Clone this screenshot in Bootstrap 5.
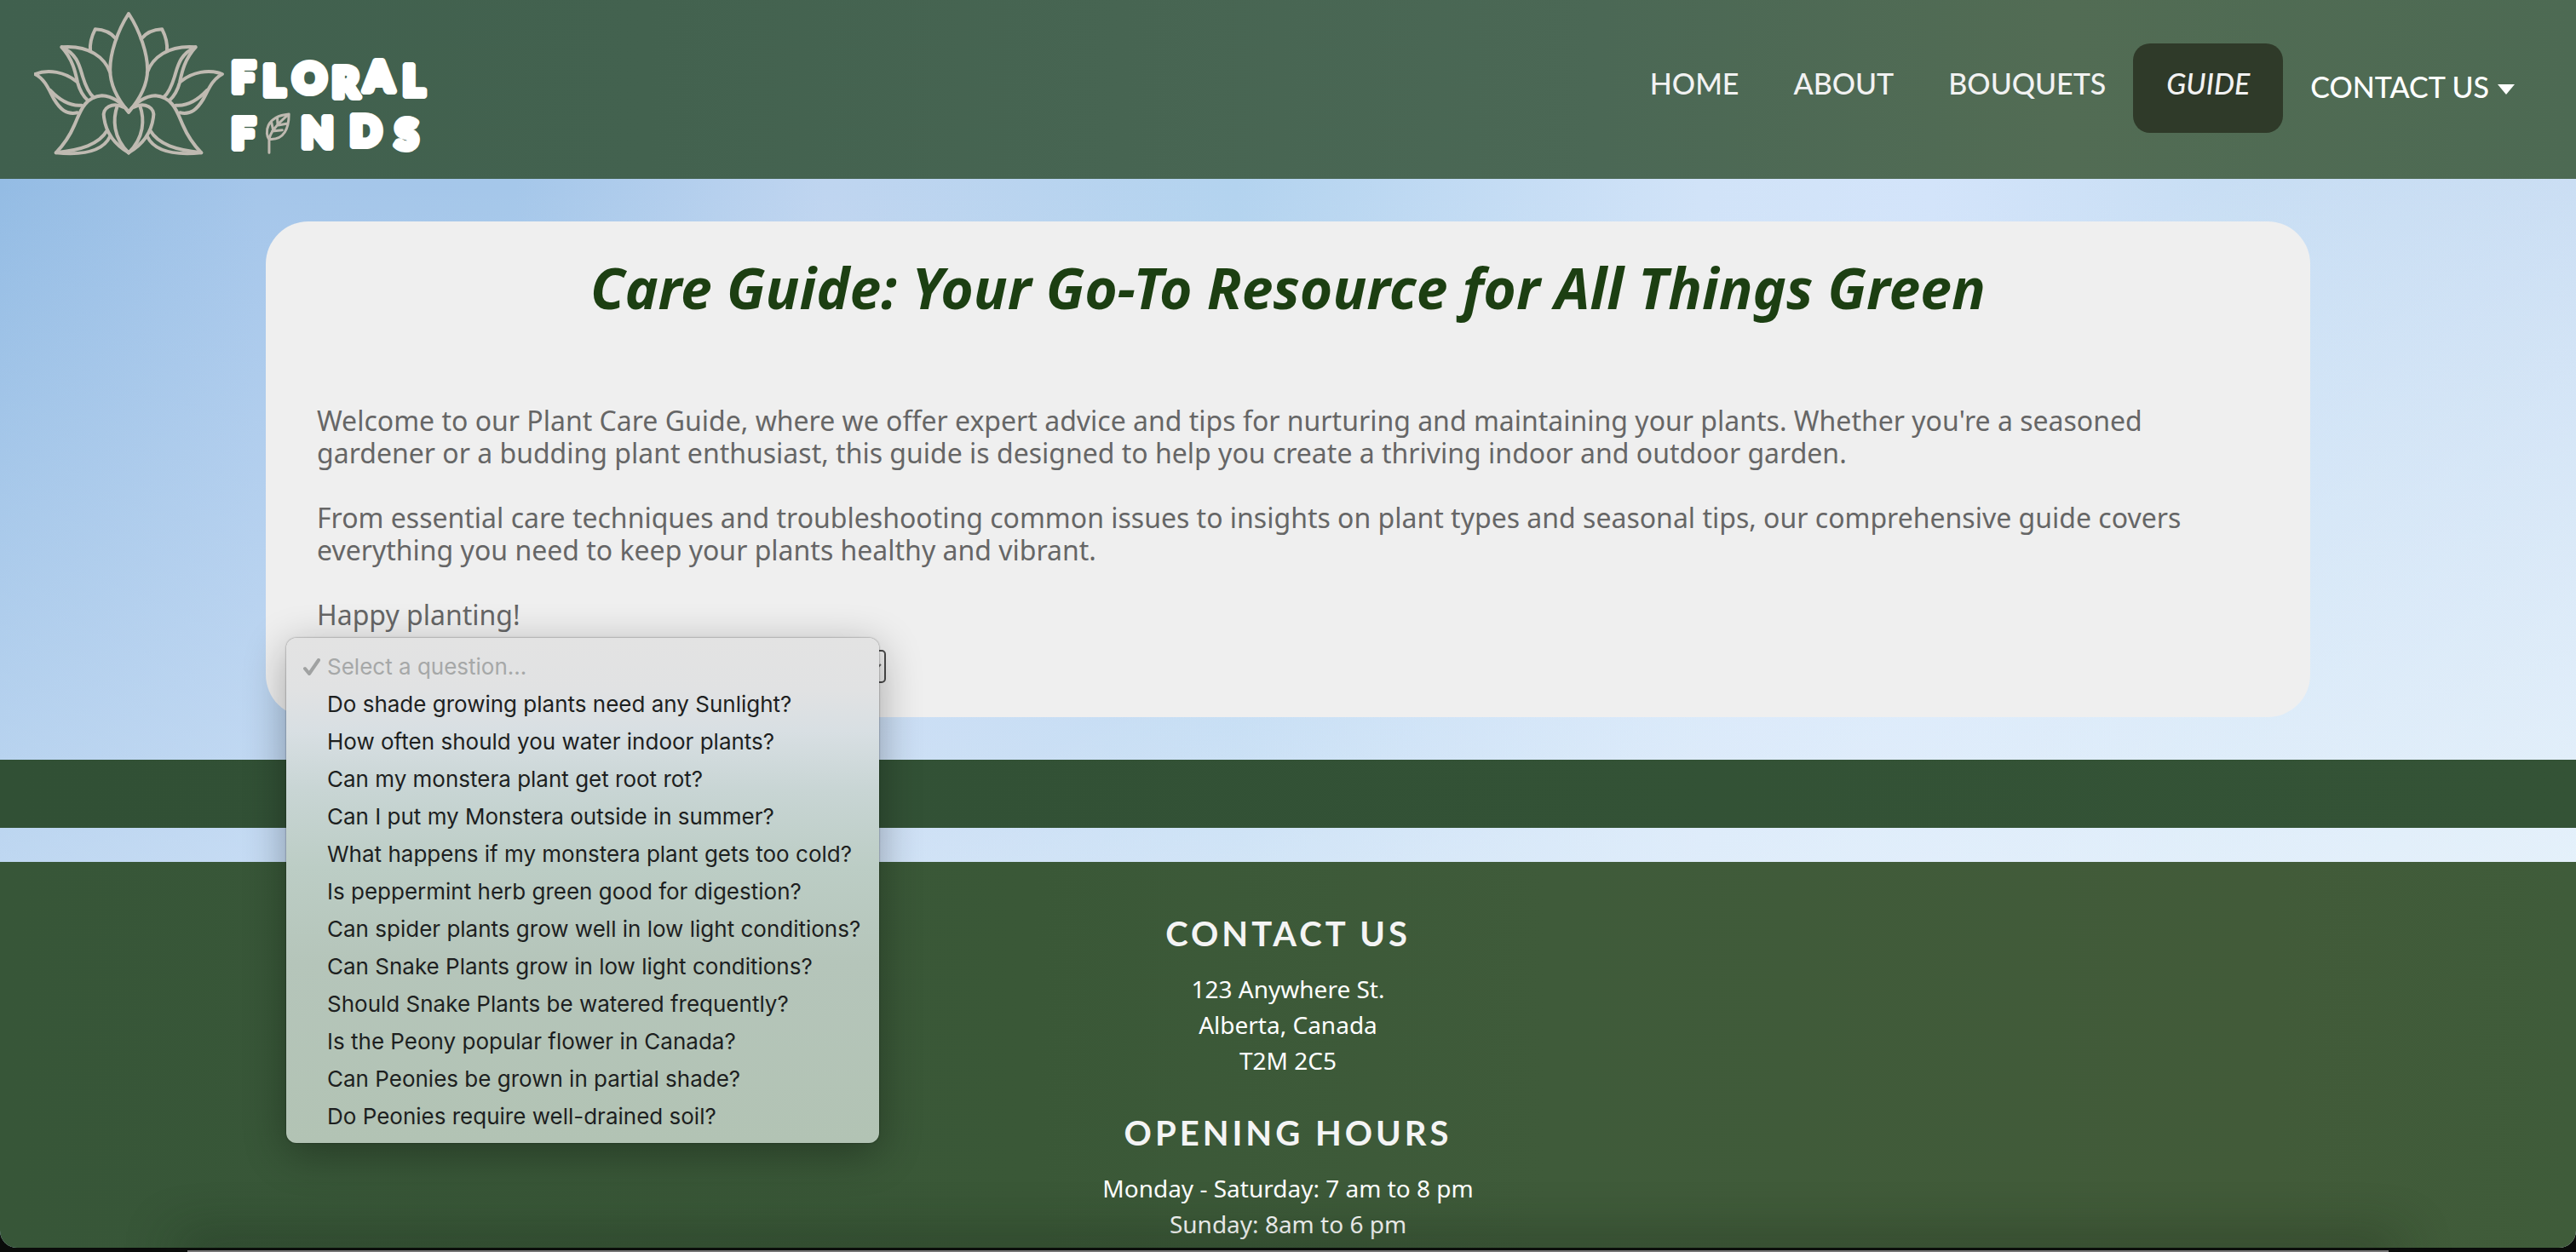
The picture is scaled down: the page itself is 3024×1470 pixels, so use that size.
<!DOCTYPE html>
<html lang="en">
<head>
<meta charset="utf-8">
<meta name="viewport" content="width=device-width, initial-scale=1">
<title>Floral Finds - Care Guide</title>
<link href="https://cdn.jsdelivr.net/npm/bootstrap@5.3.0/dist/css/bootstrap.min.css" rel="stylesheet">
<style>
  body { background: #0a0c0a; font-family: "Noto Sans", sans-serif; overflow: hidden; }
  .site {
    border-radius: 0 0 20px 20px;
    background:
      linear-gradient(to bottom right, rgba(236,246,252,0) 50%, rgba(236,246,252,.7) 85%),
      linear-gradient(to bottom, rgba(220,234,250,0) 15%, rgba(220,234,250,.6) 70%),
      linear-gradient(to right, #94bce4 0%, #a5c6ea 10%, #a5c7ea 20%, #bfd5f0 32%, #b3d3ef 48%, #d1e3f8 66%, #d3e4fa 75%, #c8def4 86%, #c5daf2 100%);
  }
  .site-header { background: linear-gradient(to right, #40604e, #43624f 25%, #4b6855 62%, #526c54 80%, #4d6a53); padding: 0 40px; height: 210px; }
  .brand-logo { width: 468px; height: 210px; display: block; }
  .brand-text { font-family: Lato, sans-serif; font-weight: 900; font-size: 48px; fill: #fff; stroke: #fff; stroke-width: 8px; stroke-linejoin: round; }
  .line-art { fill: none; stroke: #bfbab1; stroke-width: 4px; stroke-linejoin: round; stroke-linecap: round; }
  .line-art path { vector-effect: non-scaling-stroke; }
  .leaf-art { stroke-width: 3px; }
  .main-nav { padding-bottom: 4px; }
  .site-link {
    font-family: Lato, sans-serif; font-weight: 500; font-size: 34px; line-height: 40px;
    color: #f2f2f2; padding: 27px 32px 38px; border: 0; border-radius: 20px; background: none; text-decoration: none;
  }
  .site-link.active { background: #2f3a29; font-style: italic; padding-left: 39px; padding-right: 39px; }
  .site-link.with-caret { color: #fff; padding: 31px 32px 34px; }
  .caret-icon { width: 20px; height: 12px; margin-left: 10px; vertical-align: 4px; }

  .guide-card { max-width: 2400px; background: #efefef; border-radius: 50px; margin: 50px auto; padding: 37px 60px 40px; }
  .guide-title { color: #1c3f12; font-weight: 700; font-style: italic; font-size: 66px; line-height: 80px; margin: 0 0 98px; }
  .guide-copy p { color: #666; font-size: 32px; line-height: 38px; margin: 0 0 38px; }
  .guide-copy p:last-child { margin-bottom: 22px; }
  .question-select { display: block; width: 668px; height: 39px; padding: 0 12px; font: 26px/30px Inter, sans-serif; color: #666; background: #efefef; border: 2px solid #4a4a4a; border-radius: 5px; }
  .question-list {
    left: -36px; top: -14px; width: 696px; z-index: 5; margin: 0; padding: 12px 0 9px; border-radius: 12px;
    font: 26px/44px Inter, sans-serif; color: #1d1f1f;
    background: linear-gradient(to bottom, #e3e3e3 0, #e1e2e3 60px, #d8dfe3 110px, #c8d5d4 180px, #bccdc5 270px, #b5c5ba 380px, #b2c3b4 100%);
    box-shadow: 0 0 2px rgba(0,0,0,.55), 0 12px 50px rgba(0,0,0,.32);
  }
  .question-list li { padding: 0 20px 0 48px; }
  .question-list .chosen { color: #a6a8a8; padding-left: 20px; }
  .check-icon { width: 20px; height: 20px; margin-right: 8px; }

  .divider-band { height: 80px; background: linear-gradient(to right, #315035, #345336); margin-bottom: 40px; }
  .site-footer { background: linear-gradient(to right, #375638, #3a5837 40%, #3f5b3a 60%, #425b39 88%, #3f5c3a); color: #fff; padding: 60px 0 40px; }
  .site-footer h2 { font-family: Lato, sans-serif; font-weight: 700; font-size: 40px; line-height: 48px; letter-spacing: 4px; color: #f4f4f4; margin: 0 0 20px; }
  .site-footer address, .site-footer p { font-size: 28px; line-height: 42px; margin: 0 0 40px; }
  .bottom-edge { height: 5px; padding: 3px 220px 0; z-index: 6; }
  .bottom-edge div { height: 2px; background: #777; box-shadow: 0 0 60px 14px rgba(20,30,20,.45); }
</style>
</head>
<body class="vh-100 d-flex flex-column">
<div class="site flex-grow-1 overflow-hidden">
  <header class="site-header d-flex align-items-center justify-content-between">
    <a href="#" aria-label="Floral Finds home">
      <svg class="brand-logo" viewBox="40 0 468 210">
        <g class="line-art" transform="scale(.357 .3333)">
          <path d="M423 48C385 110 362 190 362 245C362 310 395 360 423 395C451 360 485 310 485 245C485 190 461 110 423 48Z"/>
          <g id="half">
            <path d="M382 137C365 115 340 104 313 103C300 130 295 155 297 180"/>
            <path d="M362 255C345 205 295 158 203 166C240 210 248 255 255 290C262 318 275 340 289 354"/>
            <path d="M203 166C255 190 262 235 272 270C284 312 294 330 308 343"/>
            <path d="M250 286C215 255 160 242 115 261C150 280 162 320 178 350C198 385 218 405 254 397"/>
            <path d="M165 318C195 352 230 375 268 371"/>
            <path d="M423 395C405 368 375 340 335 337C275 342 262 400 245 440C225 490 205 515 184 538C250 545 335 542 362 480"/>
            <path d="M184 538C265 528 325 510 352 460"/>
            <path d="M405 377C370 358 333 380 342 415C348 462 370 505 423 538"/>
            <path d="M386 372C370 420 372 485 423 538"/>
          </g>
          <use href="#half" transform="translate(846 0) scale(-1 1)"/>
          <path class="leaf-art" d="M885 538V492C870 470 872 410 950 402C950 450 935 495 885 490C890 460 920 430 950 402M898 458L893 432M895 462L928 458M913 440L912 416M911 442L942 436"/>
        </g>
        <g class="brand-text">
          <text x="272 309 344 390 428 473" y="108 112 109 114 107 112">FLORAL</text>
          <text x="272 354 411 464" y="174 173 171 175">FNDS</text>
        </g>
      </svg>
    </a>
    <nav class="main-nav d-flex align-items-center" aria-label="Main">
      <a class="site-link" href="#">HOME</a>
      <a class="site-link" href="#">ABOUT</a>
      <a class="site-link" href="#">BOUQUETS</a>
      <a class="site-link active" href="#" aria-current="page">GUIDE</a>
      <button class="site-link with-caret" type="button">CONTACT US<svg class="caret-icon" viewBox="0 0 20 12"><path d="M0 0H20L10 12Z" fill="#fff"/></svg></button>
    </nav>
  </header>

  <main>
    <section class="guide-card">
      <h1 class="guide-title text-center">Care Guide: Your Go-To Resource for All Things Green</h1>
      <div class="guide-copy">
        <p>Welcome to our Plant Care Guide, where we offer expert advice and tips for nurturing and maintaining your plants. Whether you're a seasoned gardener or a budding plant enthusiast, this guide is designed to help you create a thriving indoor and outdoor garden.</p>
        <p>From essential care techniques and troubleshooting common issues to insights on plant types and seasonal tips, our comprehensive guide covers everything you need to keep your plants healthy and vibrant.</p>
        <p>Happy planting!</p>
      </div>
      <form class="position-relative">
        <select class="question-select" aria-label="Select a question"><option>Select a question...</option></select>
        <ul class="question-list list-unstyled position-absolute">
          <li class="chosen d-flex align-items-center"><svg class="check-icon" viewBox="0 0 20 20"><path d="M2 12L7 18L18 2" fill="none" stroke="#a0a2a2" stroke-width="4" stroke-linecap="round" stroke-linejoin="round"/></svg>Select a question...</li>
          <li>Do shade growing plants need any Sunlight?</li>
          <li>How often should you water indoor plants?</li>
          <li>Can my monstera plant get root rot?</li>
          <li>Can I put my Monstera outside in summer?</li>
          <li>What happens if my monstera plant gets too cold?</li>
          <li>Is peppermint herb green good for digestion?</li>
          <li>Can spider plants grow well in low light conditions?</li>
          <li>Can Snake Plants grow in low light conditions?</li>
          <li>Should Snake Plants be watered frequently?</li>
          <li>Is the Peony popular flower in Canada?</li>
          <li>Can Peonies be grown in partial shade?</li>
          <li>Do Peonies require well-drained soil?</li>
        </ul>
      </form>
    </section>
    <div class="divider-band"></div>
  </main>

  <footer class="site-footer text-center">
    <h2>CONTACT US</h2>
    <address>123 Anywhere St.<br>Alberta, Canada<br>T2M 2C5</address>
    <h2>OPENING HOURS</h2>
    <p>Monday - Saturday: 7 am to 8 pm<br>Sunday: 8am to 6 pm</p>
  </footer>
</div>
<div class="bottom-edge position-relative"><div></div></div>
<script src="https://cdn.jsdelivr.net/npm/bootstrap@5.3.0/dist/js/bootstrap.bundle.min.js"></script>
</body>
</html>
